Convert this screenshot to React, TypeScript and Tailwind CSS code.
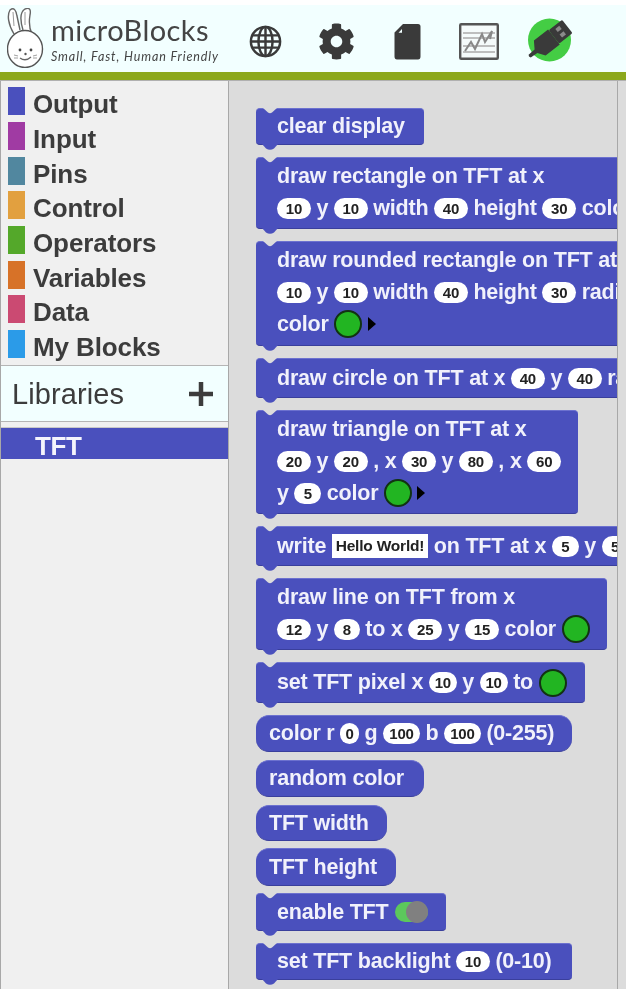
import React from "react";
import { FaCog } from "react-icons/fa";

const BLUE = "#4a50bd";

function Pill({ v, w }: { v: string; w?: string }) {
  return (
    <span className={`inline-flex h-[21px] items-center justify-center rounded-full bg-white px-[4px] text-[15px] font-bold leading-none text-[#222] ${w ?? "min-w-[34px]"}`}>
      {v}
    </span>
  );
}

function Swatch() {
  return <span className="inline-block h-[28px] w-[28px] rounded-full border-2 border-[#123312] bg-[#22b522]" />;
}

function Arrow() {
  return <span className="inline-block h-0 w-0 border-y-[7px] border-l-[8px] border-y-transparent border-l-black" />;
}

function Toggle() {
  return (
    <span className="relative ml-[1px] inline-block h-[20px] w-[33px] rounded-full bg-[#5cc85c]">
      <span className="absolute right-0 top-[-1px] h-[22px] w-[22px] rounded-full bg-[#808080]" />
    </span>
  );
}

function Str({ v }: { v: string }) {
  return <span className="inline-flex h-[24px] items-center bg-white px-[4px] text-[15.5px] font-bold leading-none text-[#222]">{v}</span>;
}

function Line({ children, h = "h-[32px]" }: { children: React.ReactNode; h?: string }) {
  return <div className={`flex items-center gap-[5.5px] whitespace-nowrap ${h}`}>{children}</div>;
}

function Block({ children, className = "", reporter = false }: { children: React.ReactNode; className?: string; reporter?: boolean }) {
  return (
    <div
      className={`relative w-max shrink-0 border-t border-b border-t-[#6c71cf] border-b-[#3a3f9c] bg-[#4a50bd] text-[21.5px] font-bold tracking-[-0.2px] text-[#f1f1fb] ${
        reporter ? "rounded-[13px] pl-[13px]" : "rounded-[4px] pl-[21px]"
      } ${className}`}
    >
      {!reporter && (
        <>
          <svg className="absolute left-[6px] top-[-1px]" width="16" height="7" viewBox="0 0 16 7">
            <path d="M1 0 L6 4.5 Q8 6 10 4.5 L15 0Z" fill="#dcdcdc" />
          </svg>
          <svg className="absolute bottom-[-6px] left-[6px]" width="16" height="6" viewBox="0 0 16 6">
            <path d="M0 0 L4 4.5 Q8 7 12 4.5 L16 0Z" fill={BLUE} />
          </svg>
        </>
      )}
      {children}
    </div>
  );
}

function Category({ color, label }: { color: string; label: string }) {
  return (
    <div className="flex h-[34.7px] items-center">
      <span className="ml-[7px] h-[28px] w-[17px]" style={{ backgroundColor: color }} />
      <span className="ml-[8px] mt-[6px] text-[26px] font-bold leading-none tracking-[-0.1px] text-[#3c3c3c]">{label}</span>
    </div>
  );
}

function Bunny() {
  return (
    <svg width="40" height="60" viewBox="0 0 40 60" fill="none" stroke="#666" strokeWidth="1.4">
      <path d="M7 26 C1 16 0 7 3 2 C7 -1 9 2 10 8 L13 22" fill="#fff" />
      <path d="M16 22 C13 12 13 4 18 1 C23 -1 24 2 23 7 C22 13 22 20 25 26" fill="#fff" />
      <path d="M6 4 L7 18 M18 4 L18 17" stroke="#999" strokeWidth="1" />
      <ellipse cx="18" cy="41" rx="17.5" ry="18.5" fill="#fff" stroke="#555" />
      <circle cx="13" cy="42" r="1.4" fill="#444" stroke="none" />
      <circle cx="24" cy="42" r="1.4" fill="#444" stroke="none" />
      <path d="M13 50 Q18.5 54 24 49" />
      <path d="M7 47 L11 48 M7 50 L11 50 M26 48 L30 47 M26 50 L30 50" stroke="#888" strokeWidth="0.8" />
      <circle cx="18.5" cy="46" r="1.2" fill="#555" stroke="none" />
    </svg>
  );
}

function Globe() {
  return (
    <svg width="33" height="33" viewBox="0 0 35 35" fill="none" stroke="#3a3a3a" strokeWidth="2.6">
      <circle cx="17.5" cy="17.5" r="15.5" />
      <ellipse cx="17.5" cy="17.5" rx="7.5" ry="15.5" />
      <path d="M17.5 2 V33 M3.5 11 H31.5 M2 17.5 H33 M3.5 24 H31.5" />
    </svg>
  );
}

function FileIcon() {
  return (
    <svg width="27" height="37" viewBox="0 0 27 37">
      <path d="M9 1 H24 Q26.5 1 26.5 3.5 V33.5 Q26.5 36.5 24 36.5 H3 Q0.5 36.5 0.5 33.5 V9.5 Z M8 6 L4.5 9.8 H8 Z" fill="#3a3a3a" fillRule="evenodd" />
    </svg>
  );
}

function Graph() {
  return (
    <svg width="40" height="37" viewBox="0 0 40 37" fill="none">
      <rect x="1.2" y="1.2" width="37.6" height="34.6" rx="1" fill="#f5fbfb" stroke="#555" strokeWidth="2.4" />
      <path d="M4 10 H36 M4 15 H36 M4 23 H36 M4 29 H36" stroke="#aaa" strokeWidth="1.5" />
      <path d="M6 28 L12 19 L16 26 L23 11 L26 19 L33 8 L31 16" stroke="#888" strokeWidth="2" />
    </svg>
  );
}

function Usb() {
  return (
    <svg width="46" height="44" viewBox="0 0 46 44">
      <circle cx="21.5" cy="22" r="21.5" fill="#44cd44" />
      <g transform="rotate(-38 22 22)">
        <path d="M-4 20.5 L4 20 L9 12.5 H27 V31.5 H9 L4 24.5 L-4 24 Q-5.5 22 -4 20.5 Z" fill="#3a3a3a" />
        <rect x="27" y="13.5" width="17" height="17" rx="1.5" fill="#3a3a3a" />
        <rect x="33" y="16.5" width="5" height="4" fill="#8a8a8a" />
        <rect x="33" y="23.5" width="5" height="4" fill="#8a8a8a" />
      </g>
    </svg>
  );
}

export default function App() {
  return (
    <div className="flex h-[989px] w-[626px] flex-col overflow-hidden bg-white font-['Liberation_Sans',Arial,sans-serif] blur-[0.4px]">
      <header className="mt-[5px] flex h-[67px] shrink-0 items-center bg-[#f2ffff]">
        <div className="ml-[7px] mt-[-2px]"><Bunny /></div>
        <div className="ml-[4px] flex w-[198px] flex-col gap-[5px] pt-[1px]">
          <span className="font-['Lato',sans-serif] text-[29px] leading-[30px] tracking-[0.4px] text-[#444]">microBlocks</span>
          <span className="font-['Lato',sans-serif] text-[12.5px] italic leading-[14px] tracking-[0.9px] text-[#444]">Small, Fast, Human Friendly</span>
        </div>
        <div className="mt-[5px] flex items-center">
          <Globe />
          <FaCog className="ml-[36px] text-[37px] text-[#3a3a3a]" />
          <div className="ml-[39px]"><FileIcon /></div>
          <div className="ml-[38px]"><Graph /></div>
          <div className="ml-[29px] mt-[-3px]"><Usb /></div>
        </div>
      </header>
      <div className="h-[8px] shrink-0 bg-[#8ca81c]" />
      <div className="flex min-h-0 flex-1 border-t border-[#b0b0b0]">
        <aside className="flex w-[229px] shrink-0 flex-col border-x border-x-[#a8a8a8] bg-[#f0f0f0]">
          <div className="h-[284px] pt-[3px]">
            <Category color="#4a50bd" label="Output" />
            <Category color="#a03ba3" label="Input" />
            <Category color="#51879f" label="Pins" />
            <Category color="#e2a03f" label="Control" />
            <Category color="#54a82a" label="Operators" />
            <Category color="#d77228" label="Variables" />
            <Category color="#cb4a72" label="Data" />
            <Category color="#2b9be8" label="My Blocks" />
          </div>
          <div className="flex h-[57px] items-center justify-between border-y border-[#b5b5b5] bg-[#f2ffff] pl-[11px] pr-[15px] text-[#3c3c3c]">
            <span className="pt-[3px] text-[29px] tracking-[0.1px]">Libraries</span>
            <svg width="24" height="24" viewBox="0 0 24 24"><path d="M12 0 V24 M0 12 H24" stroke="#3c3c3c" strokeWidth="4.5" /></svg>
          </div>
          <div className="mt-[5px] flex h-[32px] items-center border-t border-[#c8c8c8] bg-[#4a50bd] pl-[34px] pt-[5px] text-[26px] font-bold tracking-[-0.4px] text-[#f4f4fc]">TFT</div>
        </aside>
        <main className="flex w-[388px] shrink-0 flex-col items-start gap-[12px] overflow-hidden bg-[#dcdcdc] pl-[27px] pt-[27px]">
          <Block className="pr-[19px]"><Line h="h-[35px]">clear display</Line></Block>
          <Block className="pb-[4px] pr-[19px] pt-[2px]">
            <Line>draw rectangle on TFT at x</Line>
            <Line><Pill v="10" />y<Pill v="10" />width<Pill v="40" />height<Pill v="30" />color<Swatch /><Arrow /></Line>
          </Block>
          <Block className="pb-[5px] pr-[19px] pt-[2px]">
            <Line>draw rounded rectangle on TFT at x</Line>
            <Line><Pill v="10" />y<Pill v="10" />width<Pill v="40" />height<Pill v="30" />radius<Pill v="8" w="min-w-[27px]" /></Line>
            <Line>color<Swatch /><Arrow /></Line>
          </Block>
          <Block className="pr-[19px]"><Line h="h-[38px]">draw circle on TFT at x<Pill v="40" />y<Pill v="40" />radius<Pill v="30" /></Line></Block>
          <Block className="pb-[4px] pr-[17px] pt-[2px]">
            <Line>draw triangle on TFT at x</Line>
            <Line><Pill v="20" />y<Pill v="20" />, x<Pill v="30" />y<Pill v="80" />, x<Pill v="60" /></Line>
            <Line>y<Pill v="5" w="min-w-[27px]" />color<Swatch /><Arrow /></Line>
          </Block>
          <Block className="pr-[19px]"><Line h="h-[38px]">write<Str v="Hello World!" />on TFT at x<Pill v="5" w="min-w-[27px]" />y<Pill v="5" w="min-w-[27px]" />color<Swatch /></Line></Block>
          <Block className="pb-[4px] pr-[17px] pt-[2px]">
            <Line>draw line on TFT from x</Line>
            <Line><Pill v="12" />y<Pill v="8" w="min-w-[26px]" />to x<Pill v="25" />y<Pill v="15" />color<Swatch /></Line>
          </Block>
          <Block className="pr-[18px]"><Line h="h-[39px]">set TFT pixel x<Pill v="10" w="min-w-[28px]" />y<Pill v="10" w="min-w-[28px]" />to<Swatch /></Line></Block>
          <Block reporter className="pr-[18px]"><Line h="h-[35px]">color r<Pill v="0" w="min-w-[19px]" />g<Pill v="100" w="min-w-[37px]" />b<Pill v="100" w="min-w-[37px]" />(0-255)</Line></Block>
          <Block reporter className="mt-[-4px] pr-[20px]"><Line h="h-[35px]">random color</Line></Block>
          <Block reporter className="mt-[-4px] pr-[18px]"><Line h="h-[34px]">TFT width</Line></Block>
          <Block reporter className="mt-[-5px] pr-[19px]"><Line h="h-[36px]">TFT height</Line></Block>
          <Block className="mt-[-5px] pr-[18px]"><Line h="h-[36px]">enable TFT<Toggle /></Line></Block>
          <Block className="pr-[20px]"><Line h="h-[35px]">set TFT backlight<Pill v="10" />(0-10)</Line></Block>
        </main>
        <div className="flex-1 border-l border-[#a8a8a8] bg-[#dcdcdc]" />
      </div>
    </div>
  );
}
